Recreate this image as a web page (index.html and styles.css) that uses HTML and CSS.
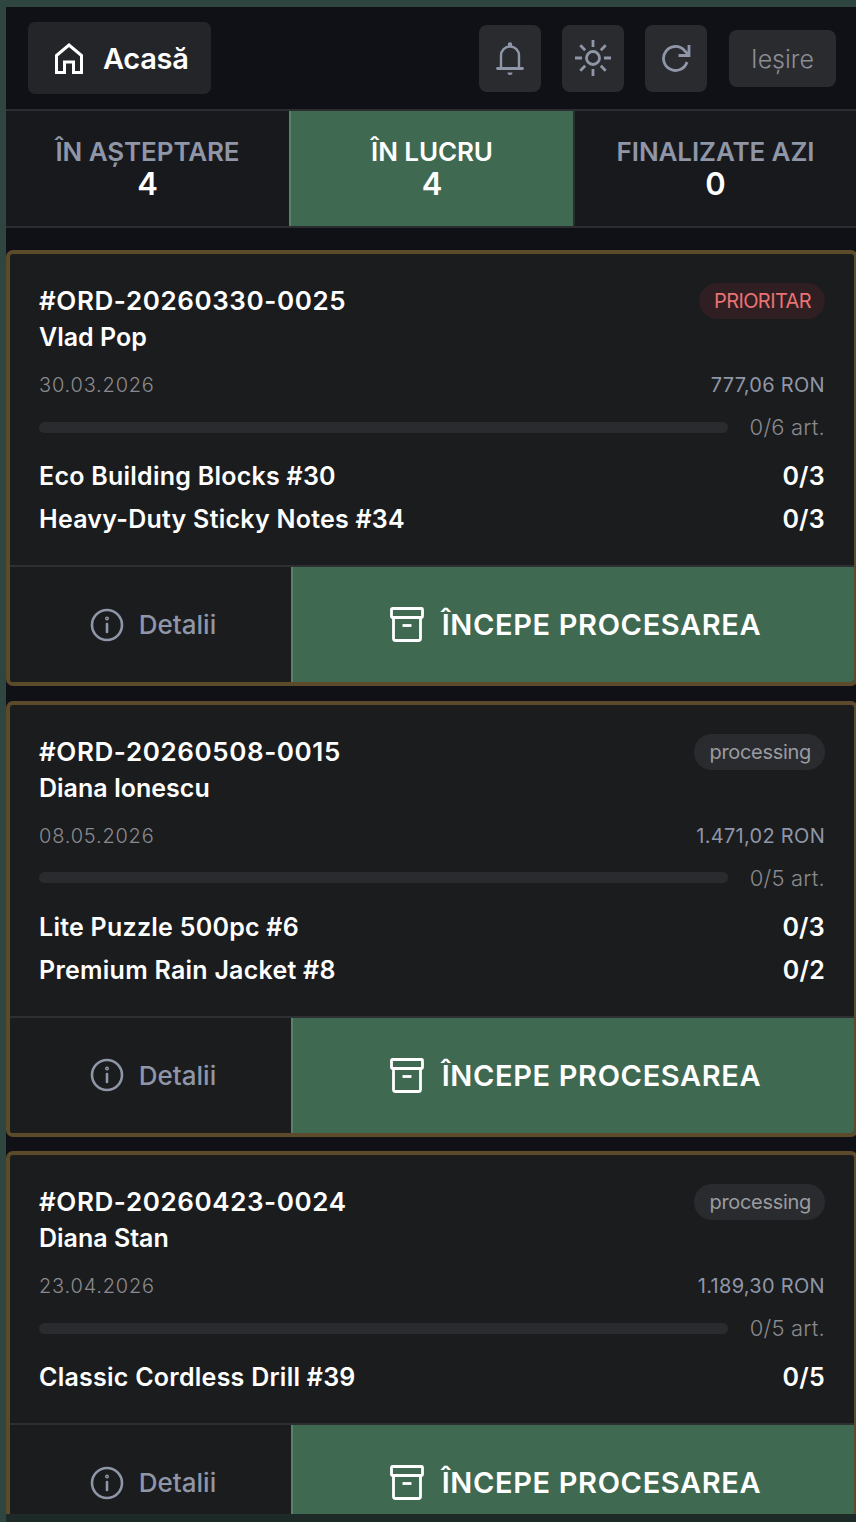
FILE: index.html
```html
<!DOCTYPE html>
<html lang="ro">
<head>
  <meta charset="UTF-8" />
  <meta name="viewport" content="width=device-width, initial-scale=1.0" />
  <title>Comenzi</title>
  <link rel="stylesheet" href="styles.css">
</head>
<body>
  <div class="shell">
    <div class="app">
      <header class="topbar">
        <a class="home-btn">
          <svg class="home-icon" viewBox="0 0 28 31" fill="none" stroke="currentColor" stroke-width="3" stroke-linejoin="miter"><path d="M1.5 12.5 14 2l12.500 10.500V29.500h-8V19h-9v10.500h-8z"/></svg>
          <span>Acasă</span>
        </a>
        <div class="top-actions">
          <button class="icon-btn">
            <svg width="28" height="35" viewBox="0 0 28 35" fill="none" stroke="currentColor" stroke-width="2.400" stroke-linecap="round"><path d="M5 27V14.500a9 9 0 0 1 18 0V27"/><path d="M1.500 27.500h25" stroke-width="2.800"/><circle cx="14" cy="3.500" r="1.500" fill="currentColor" stroke-width="1.500"/><path d="M11.500 31.500h5a2.500 2.500 0 0 1-5 0z" fill="currentColor" stroke="none"/></svg>
          </button>
          <button class="icon-btn">
            <svg width="38" height="38" viewBox="0 0 38 38" fill="none" stroke="currentColor" stroke-width="2.800"><circle cx="19" cy="19" r="6.500"/><path d="M19 1v7M19 30v7M1 19h7M30 19h7M6.300 6.300l4.900 4.900M26.800 26.800l4.900 4.900M6.300 31.700l4.900-4.900M26.800 11.200l4.900-4.900"/></svg>
          </button>
          <button class="icon-btn">
            <svg width="30" height="30" viewBox="0 0 30 30" fill="none" stroke="currentColor" stroke-width="2.800"><path d="M26 19a12 12 0 1 1-2.500-11.500L28 12"/><path d="M28 2v10.500H17.500"/></svg>
          </button>
          <button class="exit-btn">Ieșire</button>
        </div>
      </header>

      <nav class="tabs">
        <div class="tab"><span class="tab-label">ÎN AȘTEPTARE</span><span class="tab-count">4</span></div>
        <div class="tab tab-active"><span class="tab-label">ÎN LUCRU</span><span class="tab-count">4</span></div>
        <div class="tab tab-last"><span class="tab-label">FINALIZATE AZI</span><span class="tab-count">0</span></div>
      </nav>

      <main class="orders">
        <article class="order">
          <div class="order-body">
            <div class="row">
              <div class="order-id">#ORD-20260330-0025</div>
              <span class="badge badge-priority">PRIORITAR</span>
            </div>
            <div class="client">Vlad Pop</div>
            <div class="row meta">
              <span class="date">30.03.2026</span>
              <span class="total">777,06 RON</span>
            </div>
            <div class="progress">
              <div class="track"></div>
              <span class="progress-text">0/6 art.</span>
            </div>
            <ul class="items">
              <li><span>Eco Building Blocks #30</span><span>0/3</span></li>
              <li><span>Heavy-Duty Sticky Notes #34</span><span>0/3</span></li>
            </ul>
          </div>
          <div class="order-foot">
            <button class="details-btn">
              <svg class="info-icon" viewBox="0 0 34 34" fill="none" stroke="currentColor" stroke-width="2.600" stroke-linecap="round"><circle cx="17" cy="17" r="15"/><path d="M17 16v8"/><circle cx="17" cy="10.500" r="0.700"/></svg>
              <span>Detalii</span>
            </button>
            <button class="start-btn">
              <svg class="box-icon" viewBox="0 0 34 35" fill="none" stroke="currentColor" stroke-width="2.800" stroke-linejoin="round"><rect x="1.500" y="1.500" width="31" height="9" rx="1"/><path d="M3.500 10.500v21a2 2 0 0 0 2 2h23a2 2 0 0 0 2-2v-21"/><path d="M12.500 18.500h9"/></svg>
              <span>ÎNCEPE PROCESAREA</span>
            </button>
          </div>
        </article>

        <article class="order">
          <div class="order-body">
            <div class="row">
              <div class="order-id">#ORD-20260508-0015</div>
              <span class="badge">processing</span>
            </div>
            <div class="client">Diana Ionescu</div>
            <div class="row meta">
              <span class="date">08.05.2026</span>
              <span class="total">1.471,02 RON</span>
            </div>
            <div class="progress">
              <div class="track"></div>
              <span class="progress-text">0/5 art.</span>
            </div>
            <ul class="items">
              <li><span>Lite Puzzle 500pc #6</span><span>0/3</span></li>
              <li><span>Premium Rain Jacket #8</span><span>0/2</span></li>
            </ul>
          </div>
          <div class="order-foot">
            <button class="details-btn">
              <svg class="info-icon" viewBox="0 0 34 34" fill="none" stroke="currentColor" stroke-width="2.600" stroke-linecap="round"><circle cx="17" cy="17" r="15"/><path d="M17 16v8"/><circle cx="17" cy="10.500" r="0.700"/></svg>
              <span>Detalii</span>
            </button>
            <button class="start-btn">
              <svg class="box-icon" viewBox="0 0 34 35" fill="none" stroke="currentColor" stroke-width="2.800" stroke-linejoin="round"><rect x="1.500" y="1.500" width="31" height="9" rx="1"/><path d="M3.500 10.500v21a2 2 0 0 0 2 2h23a2 2 0 0 0 2-2v-21"/><path d="M12.500 18.500h9"/></svg>
              <span>ÎNCEPE PROCESAREA</span>
            </button>
          </div>
        </article>

        <article class="order">
          <div class="order-body">
            <div class="row">
              <div class="order-id">#ORD-20260423-0024</div>
              <span class="badge">processing</span>
            </div>
            <div class="client">Diana Stan</div>
            <div class="row meta">
              <span class="date">23.04.2026</span>
              <span class="total">1.189,30 RON</span>
            </div>
            <div class="progress">
              <div class="track"></div>
              <span class="progress-text">0/5 art.</span>
            </div>
            <ul class="items">
              <li><span>Classic Cordless Drill #39</span><span>0/5</span></li>
            </ul>
          </div>
          <div class="order-foot">
            <button class="details-btn">
              <svg class="info-icon" viewBox="0 0 34 34" fill="none" stroke="currentColor" stroke-width="2.600" stroke-linecap="round"><circle cx="17" cy="17" r="15"/><path d="M17 16v8"/><circle cx="17" cy="10.500" r="0.700"/></svg>
              <span>Detalii</span>
            </button>
            <button class="start-btn">
              <svg class="box-icon" viewBox="0 0 34 35" fill="none" stroke="currentColor" stroke-width="2.800" stroke-linejoin="round"><rect x="1.500" y="1.500" width="31" height="9" rx="1"/><path d="M3.500 10.500v21a2 2 0 0 0 2 2h23a2 2 0 0 0 2-2v-21"/><path d="M12.500 18.500h9"/></svg>
              <span>ÎNCEPE PROCESAREA</span>
            </button>
          </div>
        </article>
      </main>
    </div>
  </div>
</body>
</html>
```

FILE: styles.css
```css
* {
  box-sizing: border-box;
}
html, body {
  height: 100%;
}
body {
  margin: 0;
  padding: 7px 0 0 6px;
  background: #2f4540;
  font-family: Inter, 'Noto Sans', sans-serif;
  color: #fff;
  overflow: hidden;
}
button {
  font-family: inherit;
  border: none;
  cursor: pointer;
}
.shell {
  height: 1515px;
  background: #1e2a28;
}
.app {
  height: 1507px;
  background: #101116;
  overflow: hidden;
}
.topbar {
  height: 104px;
  display: flex;
  align-items: center;
  justify-content: space-between;
  padding: 0 20px 0 22px;
  border-bottom: 2px solid #2c2d30;
}
.home-btn {
  width: 183px;
  height: 72px;
  display: flex;
  align-items: center;
  gap: 20px;
  padding-left: 27px;
  background: #242528;
  border-radius: 7px;
  font-size: 29px;
  font-weight: 600;
  letter-spacing: -0.3px;
}
.home-icon {
  width: 28px;
  height: 31px;
}
.top-actions {
  display: flex;
  align-items: center;
  gap: 21px;
}
.icon-btn {
  width: 62px;
  height: 67px;
  display: flex;
  align-items: center;
  justify-content: center;
  background: #2a2b2f;
  border-radius: 8px;
  color: #8f96a8;
}
.exit-btn {
  width: 107px;
  height: 57px;
  margin: 1px 0 0 1px;
  background: #2a2b2f;
  border-radius: 8px;
  color: #8b8e97;
  font-size: 25px;
  font-weight: 300;
}
.tabs {
  height: 117px;
  display: grid;
  grid-template-columns: 283px 286px 1fr;
  border-bottom: 2px solid #2c2d30;
}
.tab {
  display: flex;
  flex-direction: column;
  align-items: center;
  justify-content: center;
  background: #18191d;
  padding-bottom: 1px;
}
.tab-active {
  background: #3f6951;
  border-left: 2px solid #5a8269;
  border-right: 2px solid #2c2d30;
}
.tab-label {
  font-size: 26px;
  line-height: 32px;
  font-weight: 600;
  color: #8f96a8;
  letter-spacing: -0.1px;
}
.tab-active .tab-label {
  color: #fff;
}
.tab-count {
  font-size: 31px;
  line-height: 32px;
  font-weight: 600;
}
.orders {
  display: flex;
  flex-direction: column;
  gap: 14.5px;
  padding-top: 22px;
  margin-right: -2px;
}
.order {
  border: 4px solid #5c4b2b;
  border-radius: 7px;
  background: #1b1c1e;
  overflow: hidden;
}
.order-body {
  padding: 29px 29px 24px;
}
.row {
  display: flex;
  align-items: center;
  justify-content: space-between;
}
.order-id {
  font-size: 26px;
  line-height: 36px;
  font-weight: 600;
  letter-spacing: 0.6px;
}
.badge {
  height: 36px;
  padding: 0 14px 0 15px;
  display: flex;
  align-items: center;
  border-radius: 18px;
  background: #2a2b2f;
  color: #9a9ba0;
  font-size: 20px;
  letter-spacing: -0.3px;
}
.badge-priority {
  background: #2f1e22;
  color: #e87373;
  letter-spacing: -0.6px;
}
.client {
  font-size: 25px;
  line-height: 37px;
  font-weight: 600;
}
.meta {
  margin-top: 14px;
}
.date {
  font-size: 20px;
  line-height: 30px;
  font-weight: 300;
  color: #8a8a8e;
  letter-spacing: 0.8px;
}
.total {
  font-size: 20px;
  line-height: 30px;
  color: #8f96a8;
  letter-spacing: 0.3px;
}
.progress {
  display: flex;
  align-items: center;
  gap: 22px;
  margin-top: 12px;
  height: 30px;
}
.track {
  flex: 1;
  height: 11px;
  border-radius: 6px;
  background: #2a2b2e;
}
.progress-text {
  font-size: 22px;
  font-weight: 300;
  color: #8a8a8e;
  letter-spacing: 0.2px;
}
.items {
  list-style: none;
  margin: 13px 0 0;
  padding: 0;
}
.items li {
  display: flex;
  justify-content: space-between;
  font-size: 25px;
  line-height: 43px;
  font-weight: 600;
  letter-spacing: 0.25px;
}
.order-foot {
  height: 117px;
  display: grid;
  grid-template-columns: 281px 1fr;
  border-top: 2px solid #2e2f32;
}
.details-btn, .start-btn {
  display: flex;
  align-items: center;
  justify-content: center;
  height: 100%;
}
.details-btn {
  gap: 15px;
  padding: 0 0 0 5px;
  background: #1b1c1e;
  color: #8f96a8;
  font-size: 26px;
  font-weight: 500;
}
.start-btn {
  gap: 18px;
  padding: 0 2px 0 6px;
  background: #3f6951;
  border-left: 2px solid #5a8269;
  color: #fff;
  font-size: 29px;
  font-weight: 600;
  letter-spacing: 0.65px;
}
.info-icon {
  width: 34px;
  height: 34px;
}
.box-icon {
  width: 34px;
  height: 35px;
}
```
